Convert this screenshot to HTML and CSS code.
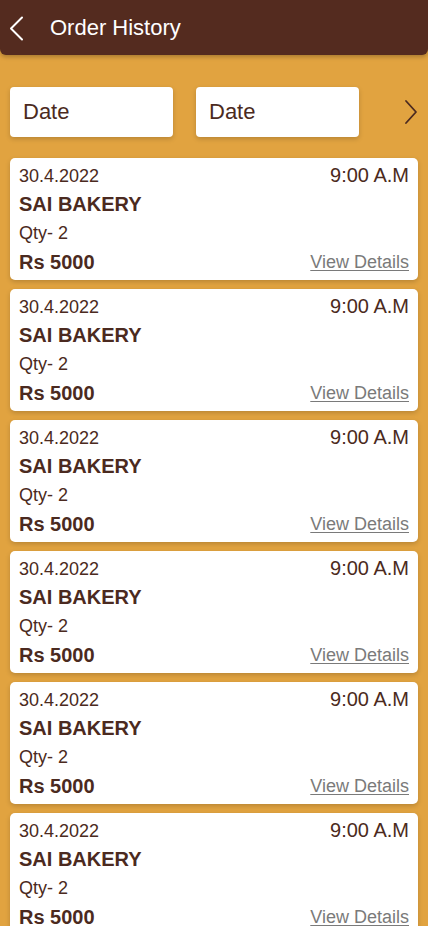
FILE: index.html
```html
<!DOCTYPE html>
<html>
<head>
<meta charset="utf-8">
<link rel="stylesheet" href="styles.css">
</head>
<body>
<header class="appbar">
  <svg class="back" width="16" height="26" viewBox="0 0 16 26"><path d="M13 1.5 L2 12.5 L13 23.5" fill="none" stroke="#fff" stroke-width="2" stroke-linecap="round" stroke-linejoin="round"/></svg>
  <h1 class="title">Order History</h1>
</header>
<div class="filters">
  <div class="date-box">Date</div>
  <div class="date-box">Date</div>
  <svg class="next" width="14" height="26" viewBox="0 0 14 26"><path d="M2 2 L12 13 L2 24" fill="none" stroke="#4b2a20" stroke-width="1.8" stroke-linecap="round" stroke-linejoin="round"/></svg>
</div>
<main class="orders">
  <div class="card">
    <div class="row"><span class="date">30.4.2022</span><span class="time">9:00 A.M</span></div>
    <div class="row"><span class="shop">SAI BAKERY</span></div>
    <div class="row qty-row"><span class="qty">Qty- 2</span></div>
    <div class="row"><span class="price">Rs 5000</span><a class="details">View Details</a></div>
  </div>
  <div class="card">
    <div class="row"><span class="date">30.4.2022</span><span class="time">9:00 A.M</span></div>
    <div class="row"><span class="shop">SAI BAKERY</span></div>
    <div class="row qty-row"><span class="qty">Qty- 2</span></div>
    <div class="row"><span class="price">Rs 5000</span><a class="details">View Details</a></div>
  </div>
  <div class="card">
    <div class="row"><span class="date">30.4.2022</span><span class="time">9:00 A.M</span></div>
    <div class="row"><span class="shop">SAI BAKERY</span></div>
    <div class="row qty-row"><span class="qty">Qty- 2</span></div>
    <div class="row"><span class="price">Rs 5000</span><a class="details">View Details</a></div>
  </div>
  <div class="card">
    <div class="row"><span class="date">30.4.2022</span><span class="time">9:00 A.M</span></div>
    <div class="row"><span class="shop">SAI BAKERY</span></div>
    <div class="row qty-row"><span class="qty">Qty- 2</span></div>
    <div class="row"><span class="price">Rs 5000</span><a class="details">View Details</a></div>
  </div>
  <div class="card">
    <div class="row"><span class="date">30.4.2022</span><span class="time">9:00 A.M</span></div>
    <div class="row"><span class="shop">SAI BAKERY</span></div>
    <div class="row qty-row"><span class="qty">Qty- 2</span></div>
    <div class="row"><span class="price">Rs 5000</span><a class="details">View Details</a></div>
  </div>
  <div class="card">
    <div class="row"><span class="date">30.4.2022</span><span class="time">9:00 A.M</span></div>
    <div class="row"><span class="shop">SAI BAKERY</span></div>
    <div class="row qty-row"><span class="qty">Qty- 2</span></div>
    <div class="row"><span class="price">Rs 5000</span><a class="details">View Details</a></div>
  </div>
</main>
</body>
</html>
```
FILE: styles.css
```css
html, body {
  margin: 0;
  padding: 0;
}
body {
  background: #e1a340;
  font-family: "Liberation Sans", Arial, sans-serif;
  color: #4b2a20;
  height: 926px;
  overflow: hidden;
}
.appbar {
  height: 55px;
  background: #542b1f;
  border-radius: 0 0 6px 6px;
  display: flex;
  align-items: center;
  padding-left: 9px;
  box-shadow: 0 2px 4px rgba(0,0,0,0.25);
}
.back {
  display: block;
  margin-top: 2px;
}
.title {
  margin: 0 0 0 25px;
  font-size: 22px;
  font-weight: normal;
  color: #fff;
}
.filters {
  display: flex;
  align-items: center;
  margin-top: 32px;
  padding-left: 10px;
  height: 50px;
}
.date-box {
  width: 163px;
  height: 50px;
  box-sizing: border-box;
  background: #fff;
  border-radius: 4px;
  box-shadow: 0 2px 5px rgba(0,0,0,0.18);
  font-size: 22px;
  padding-left: 13px;
  display: flex;
  align-items: center;
  color: #4b2a20;
}
.date-box + .date-box {
  margin-left: 23px;
}
.next {
  display: block;
  margin-left: 45px;
}
.orders {
  margin-top: 21px;
  padding: 0 10px;
  display: flex;
  flex-direction: column;
  gap: 9px;
}
.card {
  background: #fff;
  border-radius: 5px;
  height: 122px;
  box-sizing: border-box;
  padding: 4px 9px 4px 9px;
  box-shadow: 0 2px 5px rgba(0,0,0,0.18);
  flex-shrink: 0;
}
.row {
  display: flex;
  justify-content: space-between;
  align-items: center;
  height: 28px;
}
.qty-row {
  height: 30px;
}
.date {
  font-size: 18px;
}
.time {
  font-size: 20px;
  margin-top: -2px;
}
.shop {
  font-size: 20px;
  font-weight: bold;
}
.qty {
  font-size: 18px;
}
.price {
  font-size: 20px;
  font-weight: bold;
}
.details {
  font-size: 18px;
  color: #7a7a7a;
  text-decoration: underline;
  text-underline-offset: 2px;
}
```
